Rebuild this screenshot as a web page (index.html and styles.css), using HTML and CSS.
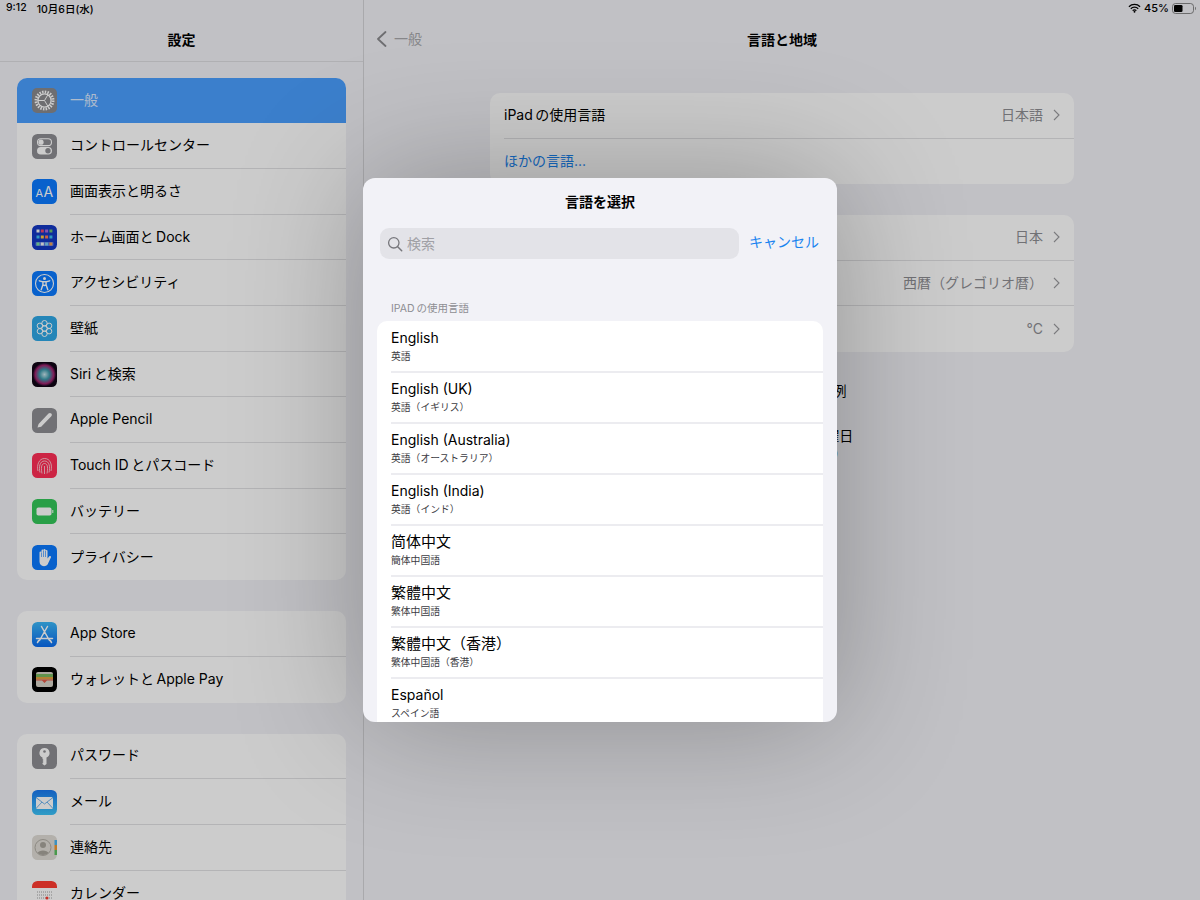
FILE: index.html
```html
<!DOCTYPE html>
<html lang="ja">
<head>
<meta charset="utf-8">
<title>言語と地域</title>
<link rel="stylesheet" href="styles.css">
</head>
<body>
<div class="app">
  <aside class="sidebar">
    <header class="nav"><h1 class="nav-title">設定</h1></header>
    <section class="group first-group">
      <div class="row selected">
        <svg class="icon" viewBox="0 0 25 25"><rect width="25" height="25" rx="5" fill="#8a8a8e"/><circle cx="12.500" cy="12.500" r="8.600" fill="none" stroke="#fff" stroke-width="2.800" stroke-dasharray="1.500 1.200"/><circle cx="12.500" cy="12.500" r="6.600" fill="none" stroke="#fff" stroke-width="1.300"/><path d="M12.500 12.500H6M12.500 12.500l3.300-5.600M12.500 12.500l3.300 5.600" stroke="#fff" stroke-width="1"/></svg>
        <div class="row-body"><span class="label">一般</span></div>
      </div>
      <div class="row">
        <svg class="icon" viewBox="0 0 25 25"><rect width="25" height="25" rx="5.500" fill="#8e8e93"/><rect x="5.500" y="4.800" width="14" height="6.800" rx="3.400" fill="none" stroke="#fff" stroke-width="1.100"/><circle cx="9" cy="8.200" r="2.600" fill="#fff"/><rect x="5" y="13" width="15" height="7.600" rx="3.800" fill="#fff"/><circle cx="16" cy="16.800" r="2.700" fill="#8e8e93"/></svg>
        <div class="row-body"><span class="label">コントロールセンター</span></div>
      </div>
      <div class="row">
        <svg class="icon" viewBox="0 0 25 25"><rect width="25" height="25" rx="5.500" fill="#0a7aff"/><text class="aa-small" x="3.500" y="18">A</text><text class="aa-big" x="11.500" y="18">A</text></svg>
        <div class="row-body"><span class="label">画面表示と明るさ</span></div>
      </div>
      <div class="row">
        <svg class="icon" viewBox="0 0 25 25"><rect width="25" height="25" rx="5.500" fill="#1337c4"/><g class="dots"><rect x="4.500" y="4.500" width="3" height="3" fill="#f4f4f4"/><rect x="8.800" y="4.500" width="3" height="3" fill="#ef476f"/><rect x="13.100" y="4.500" width="3" height="3" fill="#a96ae0"/><rect x="17.400" y="4.500" width="3" height="3" fill="#70c070"/><rect x="4.500" y="10.500" width="3" height="3" fill="#3cc0f0"/><rect x="8.800" y="10.500" width="3" height="3" fill="#ffc93c"/><rect x="13.100" y="10.500" width="3" height="3" fill="#ff7b54"/><rect x="17.400" y="10.500" width="3" height="3" fill="#3cc0f0"/><rect x="3.500" y="17" width="18" height="4" rx="1" fill="#5a78e0"/><rect x="4.500" y="17.500" width="3" height="3" fill="#7be0a0"/><rect x="8.800" y="17.500" width="3" height="3" fill="#f4f4f4"/><rect x="13.100" y="17.500" width="3" height="3" fill="#7fd0f0"/><rect x="17.400" y="17.500" width="3" height="3" fill="#f0a050"/></g></svg>
        <div class="row-body"><span class="label">ホーム画面と&#8201;Dock</span></div>
      </div>
      <div class="row">
        <svg class="icon" viewBox="0 0 25 25"><rect width="25" height="25" rx="5.500" fill="#0a7aff"/><circle cx="12.500" cy="12.500" r="9" fill="none" stroke="#fff" stroke-width="1.100"/><circle cx="12.500" cy="7.500" r="1.500" fill="#fff"/><path d="M7.300 9.800l3.600 1v3l-1.700 4.900M17.700 9.800l-3.600 1v3l1.700 4.900M10.900 10.800h3.200M10.900 14l1.600 0.500 1.600-0.500" fill="none" stroke="#fff" stroke-width="1.400" stroke-linecap="round"/></svg>
        <div class="row-body"><span class="label">アクセシビリティ</span></div>
      </div>
      <div class="row">
        <svg class="icon" viewBox="0 0 25 25"><rect width="25" height="25" rx="5.500" fill="#2fa8e6"/><g fill="none" stroke="#fff" stroke-width="1"><circle cx="12.500" cy="12.500" r="2.700"/><circle cx="12.500" cy="7.200" r="2.700"/><circle cx="12.500" cy="17.800" r="2.700"/><circle cx="7.900" cy="9.800" r="2.700"/><circle cx="17.100" cy="9.800" r="2.700"/><circle cx="7.900" cy="15.200" r="2.700"/><circle cx="17.100" cy="15.200" r="2.700"/></g></svg>
        <div class="row-body"><span class="label">壁紙</span></div>
      </div>
      <div class="row">
        <svg class="icon" viewBox="0 0 25 25"><defs><radialGradient id="siri"><stop offset="0" stop-color="#c8e4ec"/><stop offset=".45" stop-color="#3a96a8"/><stop offset=".8" stop-color="#a0246e"/><stop offset="1" stop-color="#200826"/></radialGradient></defs><rect width="25" height="25" rx="5.500" fill="#100414"/><circle cx="12.500" cy="12.500" r="11.500" fill="url(#siri)"/></svg>
        <div class="row-body"><span class="label">Siri&#8201;と検索</span></div>
      </div>
      <div class="row">
        <svg class="icon" viewBox="0 0 25 25"><rect width="25" height="25" rx="5.500" fill="#8e8e93"/><path d="M5.500 19.500l1.100-3.400 9.900-10.600c.8-.8 2-.8 2.800 0s.8 1.900 0 2.700L9.200 18.700z" fill="#fff"/></svg>
        <div class="row-body"><span class="label">Apple Pencil</span></div>
      </div>
      <div class="row">
        <svg class="icon" viewBox="0 0 25 25"><rect width="25" height="25" rx="5.500" fill="#ff2d55"/><g fill="none" stroke="#fff" stroke-width=".8" opacity=".85"><path d="M6 18c-1.500-6 1-12.500 6.500-12.500S20.500 11 19 18"/><path d="M8 19.500c-1.300-5-.5-11.500 4.500-11.500s5.800 6 4.500 11.500"/><path d="M10 20.500c-.8-4-1.300-10 2.500-10s3.300 6 2.500 10"/><path d="M12.500 13v8"/></g></svg>
        <div class="row-body"><span class="label">Touch ID&#8201;とパスコード</span></div>
      </div>
      <div class="row">
        <svg class="icon" viewBox="0 0 25 25"><rect width="25" height="25" rx="5.500" fill="#34c759"/><rect x="4.500" y="8.500" width="15" height="8" rx="1.800" fill="#fff"/><rect x="20.300" y="11" width="1" height="3" fill="#fff"/></svg>
        <div class="row-body"><span class="label">バッテリー</span></div>
      </div>
      <div class="row">
        <svg class="icon" viewBox="0 0 25 25"><rect width="25" height="25" rx="5.500" fill="#0a7aff"/><path d="M7.500 13V7.500a1 1 0 0 1 2 0V5.500a1 1 0 0 1 2 0V5a1 1 0 0 1 2 0v1a1 1 0 0 1 2 0v7.500l1.800-2.200c1-1 2.400.2 1.600 1.300L15.600 19.500c-1 1.200-2.100 1.700-3.600 1.700-3 0-4.500-2-4.500-4.700z" fill="#fff"/><path d="M9.500 7.500V12M11.500 5.500V12M13.500 6V12" stroke="#0a7aff" stroke-width=".6"/></svg>
        <div class="row-body"><span class="label">プライバシー</span></div>
      </div>
    </section>
    <section class="group">
      <div class="row">
        <svg class="icon" viewBox="0 0 25 25"><defs><linearGradient id="store" x1="0" y1="0" x2="0" y2="1"><stop offset="0" stop-color="#3cb8f8"/><stop offset="1" stop-color="#0a6cf0"/></linearGradient></defs><rect width="25" height="25" rx="5.500" fill="url(#store)"/><path d="M9.500 4.500L17.500 18.500M15.500 4.500L7.500 18.500M4.500 16.500H20.500M5.500 20.500l1.200-2M19.500 20.500l-1.200-2" fill="none" stroke="#fff" stroke-width="1.500" stroke-linecap="round"/></svg>
        <div class="row-body"><span class="label">App Store</span></div>
      </div>
      <div class="row">
        <svg class="icon" viewBox="0 0 25 25"><rect width="25" height="25" rx="5.500" fill="#000"/><rect x="4" y="5" width="17" height="15" rx="2" fill="#d8d4c8"/><rect x="4" y="7" width="17" height="3" fill="#78b860"/><rect x="4" y="10" width="17" height="2.500" fill="#e0a040"/><path d="M4 12.500h17v1H15l-2.500 2.500-2.500-2.500H4z" fill="#e05a48"/></svg>
        <div class="row-body"><span class="label">ウォレットと&#8201;Apple Pay</span></div>
      </div>
    </section>
    <section class="group">
      <div class="row">
        <svg class="icon" viewBox="0 0 25 25"><rect width="25" height="25" rx="5.500" fill="#8e8e93"/><path d="M12.500 4a5 5 0 0 1 2 9.600V20l-2 1.500-2-1.500v-1l1-1-1-1 1-1-1-1v-1.400a5 5 0 0 1 2-9.600z" fill="#fff"/><circle cx="12.500" cy="7.500" r="1.300" fill="#8e8e93"/></svg>
        <div class="row-body"><span class="label">パスワード</span></div>
      </div>
      <div class="row">
        <svg class="icon" viewBox="0 0 25 25"><defs><linearGradient id="mail" x1="0" y1="0" x2="0" y2="1"><stop offset="0" stop-color="#1a78f0"/><stop offset="1" stop-color="#3cc4f8"/></linearGradient></defs><rect width="25" height="25" rx="5.500" fill="url(#mail)"/><rect x="4" y="7" width="17" height="12" rx="1.500" fill="#fff"/><path d="M4 7.500l8.500 6.500L21 7.500M4 18.500l6-6.500M21 18.500l-6-6.500" fill="none" stroke="#4aa0e8" stroke-width=".8"/></svg>
        <div class="row-body"><span class="label">メール</span></div>
      </div>
      <div class="row">
        <svg class="icon" viewBox="0 0 25 25"><rect width="25" height="25" rx="5.500" fill="#e0ddd6"/><rect x="22.500" y="5" width="2.500" height="5" fill="#4ab4f0"/><rect x="22.500" y="10" width="2.500" height="5" fill="#f09830"/><rect x="22.500" y="15" width="2.500" height="5" fill="#5cc060"/><circle cx="11" cy="12.500" r="8" fill="none" stroke="#b0aca4" stroke-width="1"/><circle cx="11" cy="10" r="3" fill="#a8a49c"/><path d="M5.500 18c1-3.500 10-3.500 11 0-3 2.500-8 2.500-11 0z" fill="#a8a49c"/></svg>
        <div class="row-body"><span class="label">連絡先</span></div>
      </div>
      <div class="row">
        <svg class="icon" viewBox="0 0 25 25"><rect width="25" height="25" rx="5.500" fill="#fff"/><path d="M0 7V5.500A5.500 5.500 0 0 1 5.500 0h14A5.500 5.500 0 0 1 25 5.500V7z" fill="#ff3b30"/><path d="M5 11h15M5 14h15M5 17h15" stroke="#8a8a8a" stroke-width=".8" stroke-dasharray="1 1"/><circle cx="15" cy="17" r="1.500" fill="#ff3b30"/></svg>
        <div class="row-body"><span class="label">カレンダー</span></div>
      </div>
    </section>
  </aside>

  <main class="detail">
    <header class="nav detail-nav">
      <div class="back">
        <svg class="back-chevron" viewBox="0 0 11 16"><path d="M9.500 1L2 8l7.500 7" fill="none" stroke="#8a8a8e" stroke-width="1.800" stroke-linecap="round" stroke-linejoin="round"/></svg>
        <span>一般</span>
      </div>
      <h1 class="nav-title">言語と地域</h1>
    </header>
    <section class="panel lang-panel">
      <div class="setting">
        <span class="label">iPad&#8201;の使用言語</span>
        <span class="value">日本語</span>
        <svg class="chevron" viewBox="0 0 7 12"><path d="M1 1l5 5-5 5" fill="none" stroke="#9a9a9e" stroke-width="1.100"/></svg>
      </div>
      <div class="setting"><span class="link">ほかの言語...</span></div>
    </section>
    <section class="panel">
      <div class="setting">
        <span class="label">地域</span>
        <span class="value">日本</span>
        <svg class="chevron" viewBox="0 0 7 12"><path d="M1 1l5 5-5 5" fill="none" stroke="#9a9a9e" stroke-width="1.100"/></svg>
      </div>
      <div class="setting">
        <span class="label">暦法</span>
        <span class="value">西暦（グレゴリオ暦）</span>
        <svg class="chevron" viewBox="0 0 7 12"><path d="M1 1l5 5-5 5" fill="none" stroke="#9a9a9e" stroke-width="1.100"/></svg>
      </div>
      <div class="setting">
        <span class="label">温度の単位</span>
        <span class="value">°C</span>
        <svg class="chevron" viewBox="0 0 7 12"><path d="M1 1l5 5-5 5" fill="none" stroke="#9a9a9e" stroke-width="1.100"/></svg>
      </div>
    </section>
    <section class="example">
      <p class="example-title">地域フォーマット例</p>
      <p class="example-date">2021年10月6日 水曜日</p>
      <p class="example-num">¥1,234.56 4,567.89</p>
    </section>
  </main>

  <div class="scrim"></div>

  <div class="status">
    <div class="status-left"><span>9:12</span><span>10月6日(水)</span></div>
    <div class="status-right">
      <svg class="wifi" viewBox="0 0 14 10"><path d="M1 3.600a8.500 8.500 0 0 1 12 0M3 5.800a5.600 5.600 0 0 1 8 0M5 7.800a2.800 2.800 0 0 1 4 0" fill="none" stroke="#000" stroke-width="1.400"/><circle cx="7" cy="9" r="1" fill="#000"/></svg>
      <span>45%</span>
      <svg class="battery" viewBox="0 0 25 11"><rect x=".5" y=".5" width="21" height="10" rx="3" fill="none" stroke="#555" stroke-width=".8"/><rect x="2" y="2" width="8.500" height="7" rx="1.300" fill="#000"/><path d="M23 3.800c1 .3 1 3.100 0 3.400z" fill="#555"/></svg>
    </div>
  </div>

  <div class="modal">
    <h2 class="modal-title">言語を選択</h2>
    <div class="search-row">
      <div class="search">
        <svg class="search-icon" viewBox="0 0 16 16"><circle cx="6.800" cy="6.800" r="5.200" fill="none" stroke="#77777c" stroke-width="1.300"/><path d="M10.700 10.700l4 4" stroke="#77777c" stroke-width="1.500" stroke-linecap="round"/></svg>
        <span class="search-text">検索</span>
      </div>
      <span class="cancel">キャンセル</span>
    </div>
    <p class="section-label">IPAD&#8201;の使用言語</p>
    <ul class="lang-list">
      <li class="lang"><span class="lang-name">English</span><span class="lang-sub">英語</span></li>
      <li class="lang"><span class="lang-name">English (UK)</span><span class="lang-sub">英語（イギリス）</span></li>
      <li class="lang"><span class="lang-name">English (Australia)</span><span class="lang-sub">英語（オーストラリア）</span></li>
      <li class="lang"><span class="lang-name">English (India)</span><span class="lang-sub">英語（インド）</span></li>
      <li class="lang"><span class="lang-name cjk">简体中文</span><span class="lang-sub">簡体中国語</span></li>
      <li class="lang"><span class="lang-name cjk">繁體中文</span><span class="lang-sub">繁体中国語</span></li>
      <li class="lang"><span class="lang-name cjk">繁體中文（香港）</span><span class="lang-sub">繁体中国語（香港）</span></li>
      <li class="lang"><span class="lang-name">Español</span><span class="lang-sub">スペイン語</span></li>
    </ul>
  </div>
</div>
</body>
</html>
```
FILE: styles.css
```css
* { box-sizing: border-box; }

html, body {
  margin: 0;
  height: 100%;
}

body {
  font-family: Inter, "Noto Sans CJK JP", sans-serif;
  color: #000;
  overflow: hidden;
}

h1, h2, p, ul { margin: 0; padding: 0; }

.app {
  position: relative;
  display: flex;
  width: 1200px;
  height: 900px;
  overflow: hidden;
  background: #f2f2f7;
}

/* shared nav */
.nav {
  display: flex;
  align-items: center;
  justify-content: center;
  height: 62px;
  padding-top: 18px;
}

.nav-title {
  font-size: 14px;
  font-weight: 700;
  line-height: 20px;
}

/* sidebar */
.sidebar {
  flex: 0 0 364px;
  height: 900px;
  border-right: 1px solid #d4d4d8;
  overflow: hidden;
}

.sidebar .nav {
  border-bottom: 1px solid #dcdce0;
}

.group {
  margin: 0 17px 31px 17px;
  background: #fff;
  border-radius: 10px;
  overflow: hidden;
}

.first-group { margin-top: 15.6px; }

.row {
  display: flex;
  align-items: center;
  height: 45.7px;
  padding-left: 15px;
  gap: 13px;
}

.row.selected {
  background: #4a9fff;
}

.row.selected .label { color: #dbeaff; }

.icon {
  flex: 0 0 25px;
  width: 25px;
  height: 25px;
}

.aa-small {
  font-size: 11px;
  fill: #fff;
}

.aa-big {
  font-size: 14px;
  fill: #fff;
}

.row-body {
  flex: 1;
  align-self: stretch;
  display: flex;
  align-items: center;
  padding-bottom: 1px;
  border-bottom: 1px solid #e2e2e4;
}

.row:last-child .row-body,
.row.selected .row-body { border-bottom: 0; }

.label {
  font-size: 14px;
  line-height: 14px;
}

/* detail */
.detail {
  flex: 1;
  height: 900px;
}

.detail-nav {
  position: relative;
}

.back {
  position: absolute;
  left: 12px;
  top: 29px;
  display: flex;
  align-items: center;
  gap: 7px;
  font-size: 14px;
  line-height: 20px;
  color: #a8a8ac;
}

.back-chevron {
  width: 11px;
  height: 16px;
}

.panel {
  margin: 0 126px;
  background: #fff;
  border-radius: 10px;
  overflow: hidden;
}

.panel + .panel { margin-top: 31px; }

.lang-panel { margin-top: 31px; }

.setting {
  display: flex;
  align-items: center;
  height: 45.6px;
  margin-left: 14px;
  padding-right: 14px;
  border-bottom: 1px solid #e2e2e4;
}

.setting:last-child { border-bottom: 0; }

.setting .label { flex: 1; }

.value {
  font-size: 14px;
  line-height: 20px;
  color: #8e8e93;
}

.chevron {
  width: 7px;
  height: 12px;
  margin-left: 10px;
}

.link {
  font-size: 14px;
  line-height: 20px;
  color: #1a84f0;
}

.example {
  margin-top: 29px;
  text-align: center;
}

.example-title {
  font-size: 14px;
  line-height: 20px;
  letter-spacing: .4px;
}

.example-date {
  margin-top: 25px;
  font-size: 14px;
  line-height: 20px;
}

.example-num {
  font-size: 12.5px;
  line-height: 18px;
}

/* overlays */
.scrim {
  position: absolute;
  inset: 0;
  background: rgba(0, 0, 0, .2);
}

.status {
  position: absolute;
  top: 0;
  left: 0;
  right: 0;
  height: 16px;
  padding: 0 3px 0 6px;
  display: flex;
  justify-content: space-between;
  align-items: center;
  font-size: 10.5px;
  font-weight: 500;
}

.status-left {
  display: flex;
  gap: 10px;
}

.status-right {
  display: flex;
  align-items: center;
  gap: 3px;
  font-size: 11px;
}

.wifi { width: 13px; height: 10px; }
.battery { width: 25px; height: 11px; }

.modal {
  position: absolute;
  left: 363px;
  top: 178px;
  width: 474px;
  height: 544px;
  background: #f2f2f7;
  border-radius: 12px;
  overflow: hidden;
  box-shadow: 0 0 130px rgba(0, 0, 0, .28);
}

.modal-title {
  height: 50px;
  font-size: 14px;
  font-weight: 700;
  line-height: 48px;
  text-align: center;
}

.search-row {
  display: flex;
  align-items: center;
  gap: 10px;
  padding: 0 18px 0 17px;
}

.search {
  flex: 1;
  display: flex;
  align-items: center;
  gap: 4px;
  height: 31px;
  padding-left: 7px;
  background: #e3e3e8;
  border-radius: 9px;
  font-size: 14px;
  color: #a0a0a5;
}

.search-text { padding-bottom: 2px; }

.search-icon { width: 16px; height: 16px; }

.cancel {
  padding-bottom: 5px;
  font-size: 14px;
  color: #1a84f0;
}

.section-label {
  margin: 43px 0 5px 28px;
  font-size: 10.5px;
  line-height: 14px;
  color: #8e8e93;
}

.lang-list {
  list-style: none;
  margin: 0 14px;
  padding-top: 1px;
  background: #fff;
  border-radius: 10px 10px 0 0;
}

.lang {
  display: flex;
  flex-direction: column;
  height: 51px;
  margin-left: 14px;
  padding-top: 6px;
  border-bottom: 2px solid #ececf0;
}

.lang-name {
  font-size: 14px;
  line-height: 20px;
}

.lang-name.cjk { font-size: 15px; }

.lang-sub {
  font-size: 9.8px;
  line-height: 14px;
  margin-top: 2px;
  color: #3c3c43;
}
```
